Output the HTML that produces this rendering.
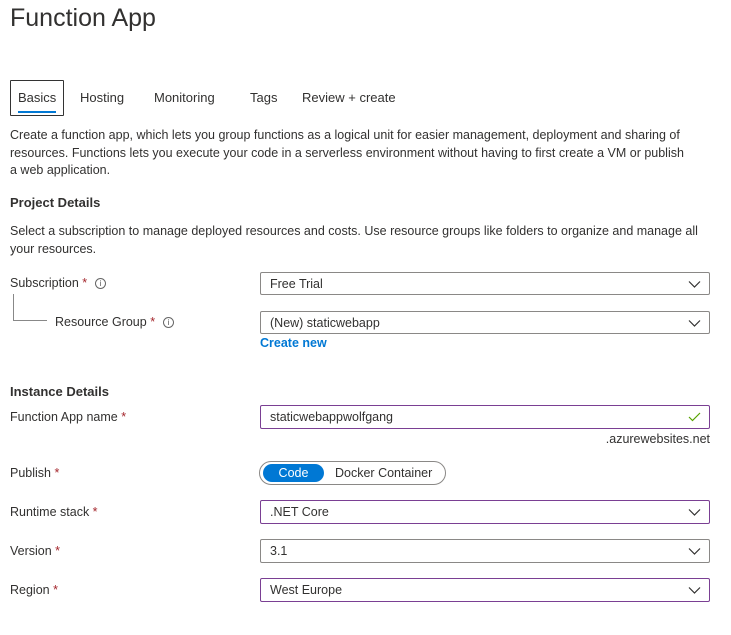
<!DOCTYPE html>
<html><head><style>
*{margin:0;padding:0;box-sizing:border-box}
body{width:731px;height:635px;background:#fff;font-family:"Liberation Sans",sans-serif;color:#323130;font-size:12.5px;position:relative;overflow:hidden}
.a{position:absolute;white-space:nowrap}
h1{position:absolute;left:10px;top:4px;font-size:25px;font-weight:normal;color:#323130}
.tab{position:absolute;top:90px;font-size:13px;color:#323130}
.p{position:absolute;left:10px;line-height:17.5px;font-size:12.5px;width:700px}
.b{font-weight:bold;font-size:13px}
.lbl{position:absolute;left:10px;font-size:12.5px}
.req{color:#a4262c}
.info{display:inline-block;width:11px;height:11px;border:1px solid #666;border-radius:50%;font-size:8px;line-height:9px;text-align:center;color:#555;vertical-align:1px;margin-left:8px}
.dd{position:absolute;left:260px;width:450px;height:23px;border:1px solid #8a8886;border-radius:2px;padding-left:9px;line-height:22px;font-size:12.5px}
.dd.pu{border-color:#7a3f93;line-height:23px}
.chev{position:absolute;right:8px;top:7px}
</style></head><body>
<h1>Function App</h1>
<div class="a" style="left:10px;top:80px;width:54px;height:36px;border:1px solid #333;border-radius:1px"></div>
<div class="a" style="left:18px;top:111px;width:38px;height:2px;background:#0078d4"></div>
<div class="tab" style="left:18px">Basics</div>
<div class="tab" style="left:80px">Hosting</div>
<div class="tab" style="left:154px">Monitoring</div>
<div class="tab" style="left:250px">Tags</div>
<div class="tab" style="left:302px">Review + create</div>
<div class="p" style="top:127px">Create a function app, which lets you group functions as a logical unit for easier management, deployment and sharing of resources. Functions lets you execute your code in a serverless environment without having to first create a VM or publish<br>a web application.</div>
<div class="a b" style="left:10px;top:195px">Project Details</div>
<div class="p" style="top:223px">Select a subscription to manage deployed resources and costs. Use resource groups like folders to organize and manage all your resources.</div>
<div class="lbl" style="top:276px">Subscription <span class="req">*</span><span class="info">i</span></div>
<div class="a" style="left:13px;top:294px;width:34px;height:27px;border-left:1px solid #888;border-bottom:1px solid #888"></div>
<div class="lbl" style="left:55px;top:315px">Resource Group <span class="req">*</span><span class="info">i</span></div>
<div class="dd" style="top:272px">Free Trial<svg class="chev" width="13" height="9"><path d="M1 1.5L6.5 7L12 1.5" fill="none" stroke="#323130" stroke-width="1.2"/></svg></div>
<div class="dd" style="top:311px">(New) staticwebapp<svg class="chev" width="13" height="9"><path d="M1 1.5L6.5 7L12 1.5" fill="none" stroke="#323130" stroke-width="1.2"/></svg></div>
<div class="a" style="left:260px;top:336px;color:#0078d4;font-weight:bold;font-size:12.5px">Create new</div>
<div class="a b" style="left:10px;top:384px">Instance Details</div>
<div class="lbl" style="top:410px">Function App name <span class="req">*</span></div>
<div class="dd pu" style="top:405px;height:24px">staticwebappwolfgang<svg class="chev" width="13" height="10" style="top:6px"><path d="M1 5L4.5 8.5L12 1" fill="none" stroke="#57a300" stroke-width="1.2"/></svg></div>
<div class="a" style="right:21px;top:432px">.azurewebsites.net</div>
<div class="lbl" style="top:466px">Publish <span class="req">*</span></div>
<div class="a" style="left:259px;top:461px;width:187px;height:24px;border:1px solid #8a8886;border-radius:12px"></div>
<div class="a" style="left:263px;top:464px;width:61px;height:18px;background:#0078d4;border-radius:9px;color:#fff;text-align:center;line-height:18px">Code</div>
<div class="a" style="left:335px;top:466px">Docker Container</div>
<div class="lbl" style="top:505px">Runtime stack <span class="req">*</span></div>
<div class="dd pu" style="top:500px;height:24px">.NET Core<svg class="chev" width="13" height="9"><path d="M1 1.5L6.5 7L12 1.5" fill="none" stroke="#323130" stroke-width="1.2"/></svg></div>
<div class="lbl" style="top:544px">Version <span class="req">*</span></div>
<div class="dd" style="top:539px;height:24px;line-height:23px">3.1<svg class="chev" width="13" height="9"><path d="M1 1.5L6.5 7L12 1.5" fill="none" stroke="#323130" stroke-width="1.2"/></svg></div>
<div class="lbl" style="top:583px">Region <span class="req">*</span></div>
<div class="dd pu" style="top:578px;height:24px">West Europe<svg class="chev" width="13" height="9"><path d="M1 1.5L6.5 7L12 1.5" fill="none" stroke="#323130" stroke-width="1.2"/></svg></div>
</body></html>
